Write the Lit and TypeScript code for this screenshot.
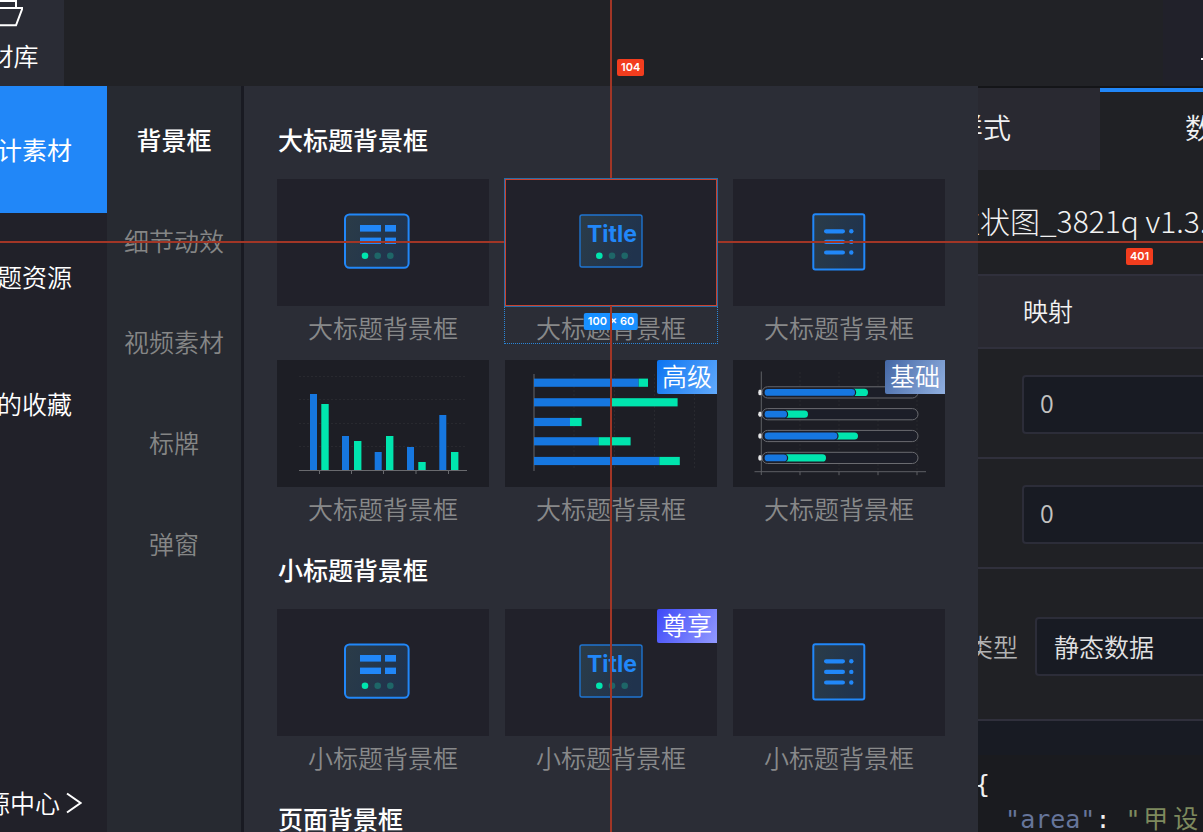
import { LitElement, html, svg, css, TemplateResult } from "lit";
import { customElement } from "lit/decorators.js";
import { classMap } from "lit/directives/class-map.js";

type Art = "table" | "title" | "list" | "columns" | "bars" | "capsules";

interface Material {
  art: Art;
  name: string;
  badge?: { text: string; tone: string };
  selected?: boolean;
}

interface Group {
  title: string;
  items: Material[];
}

const BIG = "大标题背景框";
const SMALL = "小标题背景框";

const GROUPS: Group[] = [
  {
    title: BIG,
    items: [
      { art: "table", name: BIG },
      { art: "title", name: BIG, selected: true },
      { art: "list", name: BIG },
      { art: "columns", name: BIG },
      { art: "bars", name: BIG, badge: { text: "高级", tone: "pro" } },
      { art: "capsules", name: BIG, badge: { text: "基础", tone: "basic" } },
    ],
  },
  {
    title: SMALL,
    items: [
      { art: "table", name: SMALL },
      { art: "title", name: SMALL, badge: { text: "尊享", tone: "vip" } },
      { art: "list", name: SMALL },
    ],
  },
  { title: "页面背景框", items: [] },
];

const BLUE = "#2187f8";
const BAR = "#1677e0";
const GREEN = "#00e5ae";

const fill = svg`<defs><linearGradient id="g" x1="0" y1="0" x2="1" y2="0.3">
  <stop offset="0" stop-color="#2b3c48"></stop><stop offset="1" stop-color="#20334d"></stop>
</linearGradient></defs>`;

const dots = (xs: number[]) =>
  xs.map((x, i) => svg`<circle cx=${x} cy="76.7" r="3.3" fill=${i ? "#1e6668" : GREEN}></circle>`);

const ART: Record<Art, () => TemplateResult> = {
  table: () => svg`${fill}
    <rect x="68" y="35.4" width="63.6" height="53.4" rx="4.5" fill="url(#g)" stroke=${BLUE} stroke-width="2"></rect>
    <g fill=${BLUE}>
      <rect x="83" y="46" width="21" height="6.6"></rect><rect x="108" y="46" width="11" height="6.6"></rect>
      <rect x="83" y="58.6" width="21" height="6.4"></rect><rect x="108" y="58.6" width="11" height="6.4"></rect>
    </g>
    ${dots([88, 100.7, 113.3])}` as TemplateResult,
  title: () => svg`${fill}
    <rect x="75" y="36" width="62" height="52" rx="2" fill="url(#g)" stroke="#1f74cf" stroke-width="1.4"></rect>
    <text x="82" y="63" class="title-art">Title</text>
    ${dots([94.3, 107, 119.7])}` as TemplateResult,
  list: () => svg`${fill}
    <rect x="80.3" y="35.3" width="51" height="55.2" rx="2" fill="url(#g)" stroke=${BLUE} stroke-width="2"></rect>
    <g fill=${BLUE}>
      ${[52.3, 62.9, 73.5].map(
        (y) => svg`<rect x="91" y=${y - 2.1} width="21" height="4.2" rx="2.1"></rect><circle cx="118.3" cy=${y} r="2.2"></circle>`
      )}
    </g>` as TemplateResult,
  columns: () => svg`
    <g stroke="#28292f" stroke-dasharray="2 2">
      ${[16.5, 39.5, 63.5, 86.5].map((y) => svg`<path d="M22 ${y}H190"></path>`)}
    </g>
    ${[
      [33, 34, 44.3, 44],
      [65, 76, 77, 81],
      [97.7, 92, 109, 76],
      [130, 87, 141.3, 102],
      [162.3, 55, 174, 92],
    ].map(
      ([a, ay, b, by]) => svg`<rect x=${a} y=${ay} width="7" height=${110 - ay} fill=${BAR}></rect>
        <rect x=${b} y=${by} width="7.4" height=${110 - by} fill=${GREEN}></rect>`
    )}
    <path d="M22 110.5H190M42.5 110v4M74.5 110v4M106.5 110v4M139 110v4M171.5 110v4" stroke="#696a6e" fill="none"></path>` as TemplateResult,
  bars: () => svg`
    <g stroke="#28292f" stroke-dasharray="2 2">
      ${[69, 109.5, 149.5, 189.5].map((x) => svg`<path d="M${x} 14V110"></path>`)}
    </g>
    <path d="M29 14V111" stroke="#404147" stroke-width="2"></path>
    ${[
      [22.7, 133.7, 143],
      [42.3, 107, 172.6],
      [62, 65, 76.6],
      [81.3, 93.7, 125.6],
      [101, 154.3, 174.8],
    ].map(
      ([y, a, b]) => svg`<rect x="29" y=${y - 4.1} width=${a - 29} height="8.2" fill=${BAR}></rect>
        <rect x=${a} y=${y - 4.1} width=${b - a} height="8.2" fill=${GREEN}></rect>`
    )}` as TemplateResult,
  capsules: () => svg`
    <g stroke="#28292f" stroke-dasharray="2 2">
      ${[67, 106, 145, 184].map((x) => svg`<path d="M${x} 12V110"></path>`)}
    </g>
    <path d="M28.3 11.5V115M21.5 111.7H193M67 111.7v3.5M106 111.7v3.5M145 111.7v3.5M184 111.7v3.5" stroke="#5e5f64" fill="none"></path>
    ${[
      [32.4, 122, 135],
      [54.2, 54, 75],
      [76, 104.4, 125],
      [97.9, 54, 93],
    ].map(
      ([y, a, b]) => svg`<ellipse cx="27" cy=${y} rx="1.8" ry="2.8" fill="#e4e5e6"></ellipse>
        <rect x="29" y=${y - 5.6} width="156" height="11.2" rx="5.6" fill="#1c1e28" stroke="#6a6b70"></rect>
        <rect x=${a - 8} y=${y - 3.6} width=${b - a + 8} height="7.2" rx="3.6" fill=${GREEN}></rect>
        <rect x="31" y=${y - 4} width=${a - 30.4} height="8" rx="4" fill=${BAR} stroke="#1c1e28" stroke-width="1.2"></rect>`
    )}` as TemplateResult,
};

@customElement("material-card")
class MaterialCard extends LitElement {
  static properties = { item: { attribute: false } };
  declare item: Material;

  static styles = css`
    :host {
      display: block;
      min-width: 0;
    }
    .card {
      position: relative;
      display: block;
      width: 100%;
      height: 173px;
      padding: 0;
      border: 0;
      background: none;
      color: #88898a;
      font: inherit;
      cursor: pointer;
    }
    .thumb {
      display: flex;
      justify-content: center;
      height: 127px;
      background: #21212a;
    }
    .chart {
      background: #1d1e25;
    }
    .art {
      width: 212px;
      height: 127px;
      flex: none;
    }
    .title-art {
      font: 700 23px Inter, sans-serif;
      fill: #2187f8;
    }
    .name {
      display: block;
      padding-bottom: 4px;
      line-height: 42px;
      white-space: nowrap;
    }
    .badge {
      position: absolute;
      top: 0;
      right: 0;
      padding: 0 5px 4px;
      line-height: 30px;
      border-radius: 2px 0 0 2px;
      color: #fff;
    }
    .pro {
      background: linear-gradient(120deg, #0a74f2, #61a9fb);
    }
    .basic {
      background: linear-gradient(120deg, #4467a5, #91b0e0);
    }
    .vip {
      background: linear-gradient(120deg, #3e49f8, #9299ff);
    }
    .outline {
      position: absolute;
      inset: -1px -1px 8px;
      border: 1px dotted #2a86d8;
    }
    .frame {
      position: absolute;
      inset: -1px -1px 45px;
      border: 1px solid #2a6ca4;
      box-shadow: inset 0 0 0 1px #c84230;
    }
    .size {
      position: absolute;
      top: 134px;
      left: 50%;
      transform: translateX(-50%);
      padding: 0 4px;
      border-radius: 2px;
      background: #1890ff;
      color: #fff;
      font: 600 11px/17px Inter, sans-serif;
      white-space: nowrap;
    }
  `;

  render() {
    const { art, name, badge, selected } = this.item;
    const chart = art === "columns" || art === "bars" || art === "capsules";
    return html`<button class="card" type="button">
      <span class=${classMap({ thumb: true, chart })}>
        <svg class="art" viewBox="0 0 212 127" aria-hidden="true">${ART[art]()}</svg>
      </span>
      <span class="name">${name}</span>
      ${badge ? html`<span class="badge ${badge.tone}">${badge.text}</span>` : null}
      ${selected
        ? html`<span class="outline"></span><span class="frame"></span><span class="size">100 × 60</span>`
        : null}
    </button>`;
  }
}

@customElement("data-inspector")
class DataInspector extends LitElement {
  static styles = css`
    :host {
      display: block;
      min-width: 0;
      overflow: hidden;
      background: #202125;
      color: #f2f2f2;
    }
    /* the sheet runs on under the material library and past the window edge */
    .sheet {
      display: flex;
      flex-direction: column;
      height: 100%;
      margin: 0 -140px 0 -112px;
      border-top: 2px solid #141518;
      box-sizing: border-box;
    }
    .tabs {
      display: flex;
      flex: none;
    }
    .tab {
      width: 234px;
      height: 82px;
      padding: 0 0 8px;
      border: 0;
      border-top: 4px solid #292931;
      background: #292931;
      color: inherit;
      font: inherit;
      font-size: 28px;
      line-height: 70px;
    }
    .active {
      width: 226px;
      border-top-color: #2187f8;
      background: #202125;
    }
    .heading {
      flex: none;
      box-sizing: border-box;
      height: 104px;
      margin: 0;
      padding-left: 84px;
      font-size: 30px;
      font-weight: 300;
      line-height: 100px;
      white-space: nowrap;
    }
    .row {
      display: flex;
      align-items: center;
      flex: none;
      box-sizing: border-box;
      height: 110px;
      padding: 2px 0 0 156px;
      border-bottom: 2px solid #30303c;
    }
    .head {
      height: 75px;
      padding: 0 0 2px 157px;
      border-top: 2px solid #30303c;
      background: #292931;
    }
    .source {
      height: 152px;
      padding: 4px 0 0 27px;
      gap: 17px;
    }
    .label {
      color: #b0b1b2;
    }
    .field {
      flex: 1;
      min-width: 0;
      height: 59px;
      box-sizing: border-box;
      padding: 0 16px 4px;
      border: 2px solid #2c2d39;
      border-radius: 4px;
      background: #181b23;
      color: #c2c2c0;
      font: inherit;
      appearance: none;
      outline: none;
    }
    .select {
      padding: 0 17px;
      color: #e2e2e2;
    }
    .code {
      flex: 1;
      padding-left: 109px;
      border-top: 34px solid #181b23;
      background: #1a1b1f;
      font: 25px/35px "DejaVu Sans Mono", "Noto Sans CJK SC", monospace;
      color: #f0f0f0;
    }
    .line {
      display: block;
      font: inherit;
      white-space: pre;
    }
    .brace {
      padding-top: 12px;
    }
    .key {
      color: #66759a;
    }
    .string {
      color: #7e8a5e;
    }
    .wide {
      display: inline-block;
      width: 2ch;
      text-align: center;
    }
  `;

  render() {
    return html`<div class="sheet">
      <div class="tabs" role="tablist">
        <button class="tab" role="tab" type="button">样式</button>
        <button class="tab active" role="tab" type="button">数据</button>
      </div>
      <h2 class="heading">柱状图_3821q v1.3.1</h2>
      <div class="row head">映射</div>
      <div class="row"><input class="field" aria-label="映射 x" value="0" /></div>
      <div class="row"><input class="field" aria-label="映射 y" value="0" /></div>
      <div class="row source">
        <label class="label" for="source">数据源类型</label>
        <select class="field select" id="source"><option>静态数据</option></select>
      </div>
      <div class="code"><code class="line brace">{</code><code class="line">  <span class="key">"area"</span>: <span class="string">"${[..."甲设"].map((c) => html`<span class="wide">${c}</span>`)}</span></code></div>
    </div>`;
  }
}

@customElement("app-root")
class AppRoot extends LitElement {
  static styles = css`
    :host {
      display: block;
      font: 350 25px/1.4 "Noto Sans CJK SC", sans-serif;
      color: #fff;
    }
    .page {
      position: relative;
      display: grid;
      grid-template-rows: 86px minmax(0, 1fr);
      height: 100vh;
      overflow: hidden;
      background: #202125;
    }
    .header {
      display: flex;
      justify-content: space-between;
      background: #212226;
    }
    .library {
      display: flex;
      flex-direction: column;
      align-items: center;
      width: 127px;
      margin-left: -63px;
      padding: 0 0 4px 1px;
      border: 0;
      background: #2a2c35;
      color: #fff;
      font: inherit;
      line-height: 54px;
    }
    .folder {
      width: 44px;
      height: 28px;
    }
    .more {
      width: 40px;
      padding: 0;
      border: 0;
      background: #21212a;
    }
    .dash {
      display: block;
      width: 40px;
      height: 86px;
    }
    .main {
      display: grid;
      grid-template-columns: 107px 137px minmax(0, 734fr) minmax(0, 225fr);
      min-height: 0;
    }
    .nav {
      display: flex;
      flex-direction: column;
      overflow: hidden;
      background: #212129;
    }
    .nav-item {
      display: block;
      flex: none;
      width: 170px;
      height: 127px;
      margin-left: -63px;
      line-height: 127px;
      text-align: center;
      color: inherit;
      text-decoration: none;
    }
    .current {
      background: #2187f8;
      font-weight: 400;
    }
    .center {
      display: flex;
      align-items: center;
      gap: 6px;
      width: max-content;
      margin: auto 0 12px -40px;
      color: inherit;
      text-decoration: none;
      white-space: nowrap;
    }
    .chevron {
      width: 16px;
      height: 22px;
    }
    .kinds {
      padding-top: 3px;
      border-right: 3px solid #191a22;
      background: #272a31;
      color: #858686;
    }
    .kind {
      display: block;
      line-height: 101px;
      text-align: center;
      color: inherit;
      text-decoration: none;
    }
    .chosen {
      color: #fff;
      font-weight: 500;
    }
    .materials {
      overflow: hidden;
      padding: 17px 33px 0;
      background: #2b2d36;
    }
    .group-title {
      margin: 0;
      padding: 0 1px 4px;
      font-size: 25px;
      font-weight: 500;
      line-height: 72px;
    }
    .cards {
      display: grid;
      grid-template-columns: repeat(3, minmax(0, 1fr));
      gap: 8px 16px;
    }
    .guide {
      position: absolute;
      background: #a23626;
      pointer-events: none;
    }
    .up {
      left: 610px;
      top: 0;
      width: 2px;
      height: 178px;
    }
    .down {
      left: 610px;
      top: 306px;
      width: 2px;
      bottom: 0;
    }
    .before {
      left: 0;
      top: 241px;
      width: 504px;
      height: 2px;
    }
    .after {
      left: 718px;
      top: 241px;
      right: 0;
      height: 2px;
    }
    .measure {
      position: absolute;
      padding: 0 4px;
      border-radius: 2px;
      background: #f23d1e;
      font: 600 11px/17px Inter, sans-serif;
    }
    .from-top {
      left: 617px;
      top: 59px;
    }
    .from-right {
      left: 1126px;
      top: 248px;
    }
  `;

  render() {
    return html`<div class="page">
      <header class="header">
        <button class="library" type="button">
          <svg class="folder" viewBox="0 0 44 28" fill="none" stroke="#fff" stroke-width="2" aria-hidden="true">
            <path d="M3 25V-3H15L19 1H37V8M3 25L10 8H43.5L37 25.3Z"></path>
          </svg>
          素材库
        </button>
        <button class="more" type="button" aria-label="更多">
          <svg class="dash" viewBox="0 0 40 86"><path d="M38 59H40" stroke="#fff" stroke-width="2"></path></svg>
        </button>
      </header>
      <main class="main">
        <nav class="nav">
          <a class="nav-item current" href="#design">设计素材</a>
          <a class="nav-item" href="#themes">主题资源</a>
          <a class="nav-item" href="#favorites">我的收藏</a>
          <a class="center" href="#center"
            >资源中心<svg class="chevron" viewBox="0 0 16 22" fill="none" stroke="#fff" stroke-width="2" aria-hidden="true">
              <path d="M1 1.5L14.5 11L1 20.5"></path></svg
          ></a>
        </nav>
        <nav class="kinds">
          ${["背景框", "细节动效", "视频素材", "标牌", "弹窗"].map(
            (kind, i) => html`<a class=${classMap({ kind: true, chosen: i === 0 })} href="#kind-${i}">${kind}</a>`
          )}
        </nav>
        <section class="materials">
          ${GROUPS.map(
            (group) => html`<h2 class="group-title">${group.title}</h2>
              <div class="cards">
                ${group.items.map((item) => html`<material-card .item=${item}></material-card>`)}
              </div>`
          )}
        </section>
        <data-inspector></data-inspector>
      </main>
      <div class="guide up"></div>
      <div class="guide down"></div>
      <div class="guide before"></div>
      <div class="guide after"></div>
      <span class="measure from-top">104</span>
      <span class="measure from-right">401</span>
    </div>`;
  }
}
